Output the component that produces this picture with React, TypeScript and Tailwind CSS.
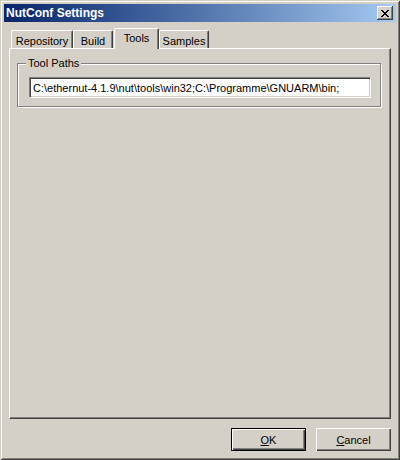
import React from "react";

const FACE = "bg-[#d4d0c8]";

const tabs = [
  { label: "Repository", w: "w-[62px]" },
  { label: "Build", w: "w-[40px]" },
  { label: "Tools", w: "w-[45px]", active: true },
  { label: "Samples", w: "w-[50px]" },
];

const App: React.FC = () => {
  return (
    <div
      className={`w-[400px] h-[460px] ${FACE} p-[4px] flex flex-col text-[11px] text-black shadow-[inset_1px_1px_#d4d0c8,inset_-1px_-1px_#404040,inset_2px_2px_#ffffff,inset_-2px_-2px_#808080]`}
      style={{ fontFamily: '"Liberation Sans", Arial, sans-serif' }}
    >
      {/* Title bar */}
      <div className="h-[18px] flex items-center justify-between bg-linear-to-r from-[#0a246a] to-[#a6caf0] pl-[2px] pr-[3px]">
        <span className="text-white font-bold text-[12px] leading-none">NutConf Settings</span>
        <button className="w-[16px] h-[14px] bg-[#d4d0c8] flex items-center justify-center shadow-[inset_-1px_-1px_#404040,inset_1px_1px_#ffffff,inset_-2px_-2px_#808080]">
          <svg width="8" height="7" viewBox="0 0 8 7" shapeRendering="crispEdges">
            <path
              d="M0 0h2v1H0zM6 0h2v1H6zM1 1h2v1H1zM5 1h2v1H5zM2 2h4v1H2zM3 3h2v1H3zM2 4h4v1H2zM1 5h2v1H1zM5 5h2v1H5zM0 6h2v1H0zM6 6h2v1H6z"
              fill="#000"
            />
          </svg>
        </button>
      </div>

      {/* Body */}
      <div className="flex-1 flex flex-col px-[5px] pt-[6px]">
        {/* Tabs */}
        <div className="flex items-end pl-[2px] h-[20px]">
          {tabs.map((t) =>
            t.active ? (
              <div
                key={t.label}
                className={`${t.w} h-[21px] -mb-px relative z-10 ml-px ${FACE} border-t border-l border-white rounded-t-[2px] shadow-[inset_-1px_0_#808080] border-r border-r-[#404040] flex items-start justify-center pt-[3px]`}
              >
                <span className="leading-[12px]">{t.label}</span>
              </div>
            ) : (
              <div
                key={t.label}
                className={`${t.w} h-[18px] ${FACE} border-t border-l border-white rounded-t-[2px] border-r border-r-[#404040] shadow-[inset_-1px_0_#808080] flex items-start justify-center pt-[4px]`}
              >
                <span className="leading-[12px]">{t.label}</span>
              </div>
            )
          )}
        </div>

        {/* Panel */}
        <div className="h-[371px] border-t border-l border-white border-r border-b border-r-[#404040] border-b-[#404040] shadow-[inset_-1px_-1px_#808080] pl-[7px] pr-[9px] pt-[14px]">
          {/* Group box */}
          <div className="relative h-[44px] border border-[#808080] shadow-[1px_1px_#ffffff,inset_1px_1px_#ffffff] pl-[11px] pr-[9px] pt-[13px]">
            <span className={`absolute left-[8px] -top-[7px] px-[2px] ${FACE} leading-[12px]`}>Tool Paths</span>
            <div className="h-[21px] bg-white border-t border-l border-[#808080] border-r border-b border-r-white border-b-white shadow-[inset_1px_1px_#404040,inset_-1px_-1px_#d4d0c8] flex items-center pl-[3px]">
              <span className="leading-[12px] whitespace-nowrap">C:\ethernut-4.1.9\nut\tools\win32;C:\Programme\GNUARM\bin;</span>
            </div>
          </div>
        </div>

        {/* Buttons */}
        <div className="flex justify-end gap-[10px] mt-[9px]">
          <button className="w-[75px] h-[23px] border border-black bg-[#d4d0c8] shadow-[inset_1px_1px_#ffffff,inset_-1px_-1px_#404040,inset_-2px_-2px_#808080] flex items-center justify-center">
            <span className="leading-[12px]"><u>O</u>K</span>
          </button>
          <button className="w-[75px] h-[23px] bg-[#d4d0c8] shadow-[inset_1px_1px_#ffffff,inset_-1px_-1px_#404040,inset_-2px_-2px_#808080] flex items-center justify-center">
            <span className="leading-[12px]"><u>C</u>ancel</span>
          </button>
        </div>
      </div>
    </div>
  );
};

export default App;
